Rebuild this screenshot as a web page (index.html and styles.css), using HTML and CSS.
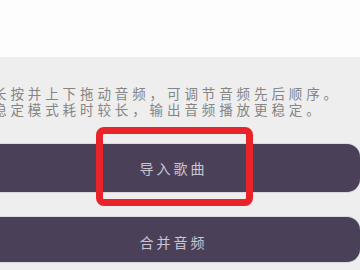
FILE: index.html
```html
<!DOCTYPE html>
<html lang="zh-CN">
<head>
<meta charset="utf-8">
<title>合并音频</title>
<link rel="stylesheet" href="styles.css">
</head>
<body>
<div class="screen">
  <div class="top"></div>
  <div class="panel">
    <div class="tips">
      <p class="tip">长按并上下拖动音频，可调节音频先后顺序。</p>
      <p class="tip">稳定模式耗时较长，输出音频播放更稳定。</p>
    </div>
    <div class="actions">
      <button class="btn btn-import">导入歌曲</button>
      <button class="btn btn-merge">合并音频</button>
    </div>
    <div class="highlight"></div>
  </div>
</div>
</body>
</html>
```
FILE: styles.css
```css
html, body {
  margin: 0;
  padding: 0;
  background: #eeeeee;
}
.screen {
  width: 360px;
  height: 270px;
  overflow: hidden;
  display: flex;
  flex-direction: column;
  font-family: "Noto Sans CJK SC", "Noto Sans", sans-serif;
}
.top {
  height: 57px;
  background: #fcfdfc;
  flex: none;
}
.panel {
  position: relative;
  flex: 1;
  background: #eeeeee;
  padding-top: 28px;
}
.tips {
  margin-left: -7px;
}
.tip {
  margin: 0;
  font-size: 13.5px;
  line-height: 16px;
  letter-spacing: 3.9px;
  color: #858585;
  white-space: nowrap;
}
.actions {
  display: flex;
  flex-direction: column;
  gap: 25px;
  margin-top: 27px;
  margin-left: -16px;
  width: 376px;
}
.btn {
  display: flex;
  align-items: center;
  justify-content: center;
  border: none;
  border-radius: 13px;
  background: #4a4159;
  color: #cbc5d4;
  font-family: inherit;
  font-size: 14px;
  letter-spacing: 3px;
  padding: 0 0 0 3px;
  box-shadow: 0 1px 0 #d9d6de, 0 -1px 0 #dcd9e0;
}
.btn-import {
  height: 48px;
}
.btn-merge {
  height: 45px;
  padding-top: 4px;
}
.highlight {
  position: absolute;
  left: 96px;
  top: 70px;
  width: 143px;
  height: 65px;
  border: 7px solid #e8242a;
  border-radius: 8px;
}
```
